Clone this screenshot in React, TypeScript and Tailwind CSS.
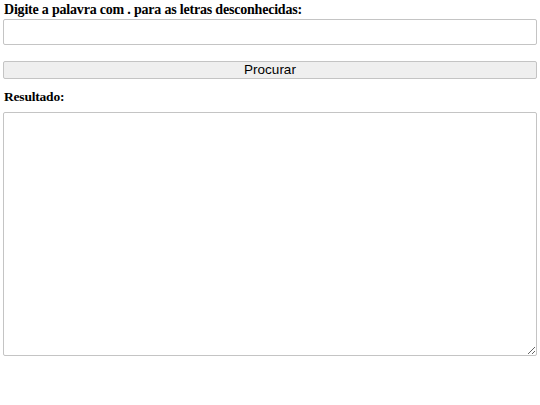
import React from "react";

export default function App() {
  return (
    <div className="w-[540px] h-[405px] bg-white px-[3px] flex flex-col">
      <label className="block h-[19px] leading-[19px] pl-[1px] text-[14px] tracking-[-0.2px] font-bold text-black font-['Liberation_Serif',serif]">
        Digite a palavra com . para as letras desconhecidas:
      </label>
      <input
        type="text"
        className="block w-full h-[26px] border border-[#c4c4c4] rounded-[2px] bg-white outline-none px-1 font-['Liberation_Sans',sans-serif] text-[13px]"
      />
      <button
        type="button"
        className="block w-full h-[18px] mt-[16px] border border-[#c4c4c4] rounded-[2px] bg-[#efefef] text-[13.5px] leading-[16px] text-black font-['Liberation_Sans',sans-serif]"
      >
        Procurar
      </button>
      <div className="h-[33px] pt-[10px] pl-[1px] text-[13.5px] tracking-[-0.2px] leading-[16px] font-bold text-black font-['Liberation_Serif',serif]">
        Resultado:
      </div>
      <textarea
        className="block w-full h-[244px] border border-[#c4c4c4] rounded-[2px] bg-white outline-none resize-y font-['Liberation_Mono',monospace] text-[13px]"
      />
    </div>
  );
}
